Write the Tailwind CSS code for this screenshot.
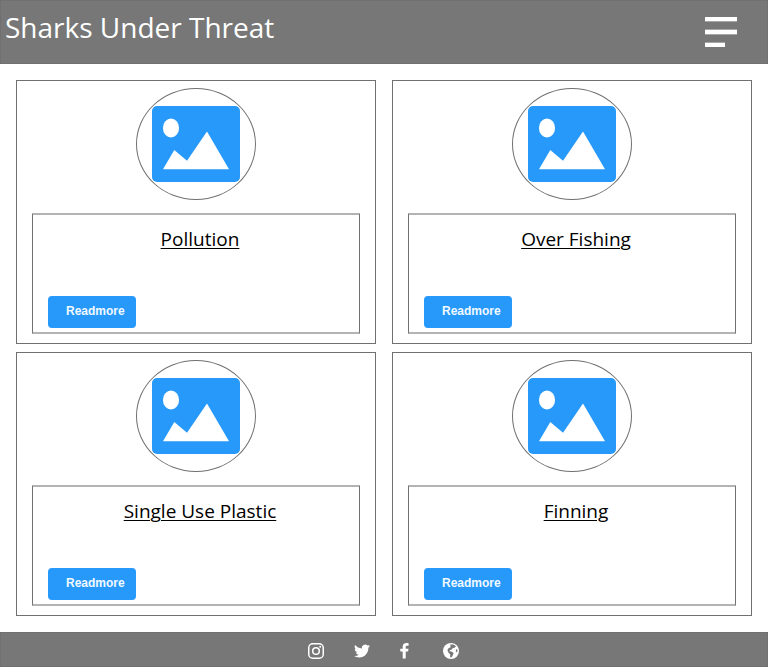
<!DOCTYPE html>
<html lang="en">
<head>
<meta charset="utf-8">
<meta name="viewport" content="width=device-width, initial-scale=1">
<title>Sharks Under Threat</title>
<script src="https://cdn.jsdelivr.net/npm/@tailwindcss/browser@4"></script>
</head>
<body class="flex min-h-screen flex-col bg-white font-['Segoe_UI','Open_Sans',sans-serif] text-black">
<svg class="hidden" aria-hidden="true">
  <symbol id="picture" viewBox="0 0 88 76">
    <rect width="88" height="76" rx="5" fill="#2699fb"/>
    <rect x="11" y="12.500" width="16" height="19" rx="8" ry="9" fill="#fff"/>
    <path d="M11 63.300 22.300 44 35 54.700 55 25.500 77 63.300Z" fill="#fff"/>
  </symbol>
</svg>

<header class="flex h-16 items-start justify-between border border-[#707070] bg-[#777] pl-1 pr-[30px]">
  <h1 class="pt-2 text-[28px] leading-9 text-white">Sharks Under Threat</h1>
  <button type="button" aria-label="Menu" class="mt-4">
    <svg class="block h-[30px] w-8" viewBox="0 0 32 30" aria-hidden="true">
      <path fill="#fff" fill-opacity=".35" d="M0 4h32v1H0zM0 12h32v6H0zM0 25h20v1H0z"/>
      <path fill="#fff" d="M0 0h32v4H0zM0 13h32v4H0zM0 26h20v4H0z"/>
    </svg>
  </button>
</header>

<main class="grid grow grid-cols-2 content-start gap-x-4 gap-y-2 p-4">
  <article class="flex flex-col border border-[#707070] px-[15px] pb-[9px] pt-[7px]">
    <div class="flex h-28 w-[120px] items-center justify-center self-center rounded-[50%] border border-[#707070]">
      <svg class="h-[76px] w-[88px]" role="img" aria-label="Pollution"><use href="#picture"/></svg>
    </div>
    <div class="mt-[13px] flex h-[121px] flex-col items-start justify-between border-x border-y-2 border-x-[#707070] border-y-[#b3b3b3] pb-1 pl-[15px] pr-[7px] pt-3">
      <h2 class="w-full text-center text-[19px] leading-6 underline decoration-1 underline-offset-2">Pollution</h2>
      <button type="button" class="h-8 w-[88px] rounded bg-[#2699fb] pb-0.5 pl-[18px] text-left font-['Liberation_Sans',Arial,sans-serif] text-xs font-bold text-[#f1f9ff]">Readmore</button>
    </div>
  </article>
  <article class="flex flex-col border border-[#707070] px-[15px] pb-[9px] pt-[7px]">
    <div class="flex h-28 w-[120px] items-center justify-center self-center rounded-[50%] border border-[#707070]">
      <svg class="h-[76px] w-[88px]" role="img" aria-label="Over Fishing"><use href="#picture"/></svg>
    </div>
    <div class="mt-[13px] flex h-[121px] flex-col items-start justify-between border-x border-y-2 border-x-[#707070] border-y-[#b3b3b3] pb-1 pl-[15px] pr-[7px] pt-3">
      <h2 class="w-full text-center text-[19px] leading-6 underline decoration-1 underline-offset-2">Over Fishing</h2>
      <button type="button" class="h-8 w-[88px] rounded bg-[#2699fb] pb-0.5 pl-[18px] text-left font-['Liberation_Sans',Arial,sans-serif] text-xs font-bold text-[#f1f9ff]">Readmore</button>
    </div>
  </article>
  <article class="flex flex-col border border-[#707070] px-[15px] pb-[9px] pt-[7px]">
    <div class="flex h-28 w-[120px] items-center justify-center self-center rounded-[50%] border border-[#707070]">
      <svg class="h-[76px] w-[88px]" role="img" aria-label="Single Use Plastic"><use href="#picture"/></svg>
    </div>
    <div class="mt-[13px] flex h-[121px] flex-col items-start justify-between border-x border-y-2 border-x-[#707070] border-y-[#b3b3b3] pb-1 pl-[15px] pr-[7px] pt-3">
      <h2 class="w-full text-center text-[19px] leading-6 underline decoration-1 underline-offset-2">Single Use Plastic</h2>
      <button type="button" class="h-8 w-[88px] rounded bg-[#2699fb] pb-0.5 pl-[18px] text-left font-['Liberation_Sans',Arial,sans-serif] text-xs font-bold text-[#f1f9ff]">Readmore</button>
    </div>
  </article>
  <article class="flex flex-col border border-[#707070] px-[15px] pb-[9px] pt-[7px]">
    <div class="flex h-28 w-[120px] items-center justify-center self-center rounded-[50%] border border-[#707070]">
      <svg class="h-[76px] w-[88px]" role="img" aria-label="Finning"><use href="#picture"/></svg>
    </div>
    <div class="mt-[13px] flex h-[121px] flex-col items-start justify-between border-x border-y-2 border-x-[#707070] border-y-[#b3b3b3] pb-1 pl-[15px] pr-[7px] pt-3">
      <h2 class="w-full text-center text-[19px] leading-6 underline decoration-1 underline-offset-2">Finning</h2>
      <button type="button" class="h-8 w-[88px] rounded bg-[#2699fb] pb-0.5 pl-[18px] text-left font-['Liberation_Sans',Arial,sans-serif] text-xs font-bold text-[#f1f9ff]">Readmore</button>
    </div>
  </article>
</main>

<footer class="flex items-center justify-center gap-[30px] border border-[#707070] bg-[#777] pb-[7px] pl-px pr-[3px] pt-[10px]">
  <a href="#" aria-label="Instagram">
    <svg class="block size-4" viewBox="0 0 16 16" fill="none" stroke="#fff" stroke-width="1.500" aria-hidden="true">
      <rect x=".75" y=".75" width="14.500" height="14.500" rx="4"/>
      <circle cx="8" cy="8" r="3.300"/>
      <circle cx="12.200" cy="3.800" r="1" fill="#fff" stroke="none"/>
    </svg>
  </a>
  <a href="#" aria-label="Twitter">
    <svg class="block size-4" viewBox="0 0 24 24" fill="#fff" aria-hidden="true">
      <path d="M23.950 4.570a10 10 0 0 1-2.820.770 4.960 4.960 0 0 0 2.160-2.720c-.950.550-2 .950-3.130 1.180a4.920 4.920 0 0 0-8.380 4.480C7.690 8.100 4.070 6.130 1.640 3.160a4.820 4.820 0 0 0-.67 2.480c0 1.710.870 3.210 2.190 4.100a4.900 4.900 0 0 1-2.230-.62v.060a4.920 4.920 0 0 0 3.950 4.830 5 5 0 0 1-2.210.080 4.940 4.940 0 0 0 4.600 3.420A9.870 9.870 0 0 1 0 19.540a14 14 0 0 0 7.550 2.210c9.050 0 14-7.500 14-13.980 0-.21 0-.42-.02-.63a9.940 9.940 0 0 0 2.420-2.570z"/>
    </svg>
  </a>
  <a href="#" aria-label="Facebook">
    <svg class="block h-4 w-[9px]" viewBox="0 0 9 16" fill="#fff" aria-hidden="true">
      <path d="M8.600.200v2.600H7.100C5.900 2.800 5.700 3.400 5.700 4.100V5.800h2.800L8.100 8.600H5.700V15.600H2.700V8.600H.300V5.800h2.400V3.700C2.700 1.300 4.200 0 6.400 0 7.400 0 8.300.100 8.600.200Z"/>
    </svg>
  </a>
  <a href="#" aria-label="Website" class="ml-1">
    <svg class="block size-4" viewBox="0 0 16 16" aria-hidden="true">
      <circle cx="8" cy="8" r="8" fill="#fff"/>
      <path fill="#777" d="M7.300 1.600 10.500 1.500 13 3.300 11.600 4.800 9.800 4.900 8.800 6.600 6.800 7.200 6.400 8.300 8.600 8.400 10.600 10 9.800 12.200 8.500 14.500 7.200 14.200 7.200 11.400 5.200 9.300 4.400 7.200 5.500 5.300 7.500 4.200ZM13.200 6 14.400 6.800 14.400 8.500 13.700 9.300 12.800 8.500Z"/>
    </svg>
  </a>
</footer>
</body>
</html>
